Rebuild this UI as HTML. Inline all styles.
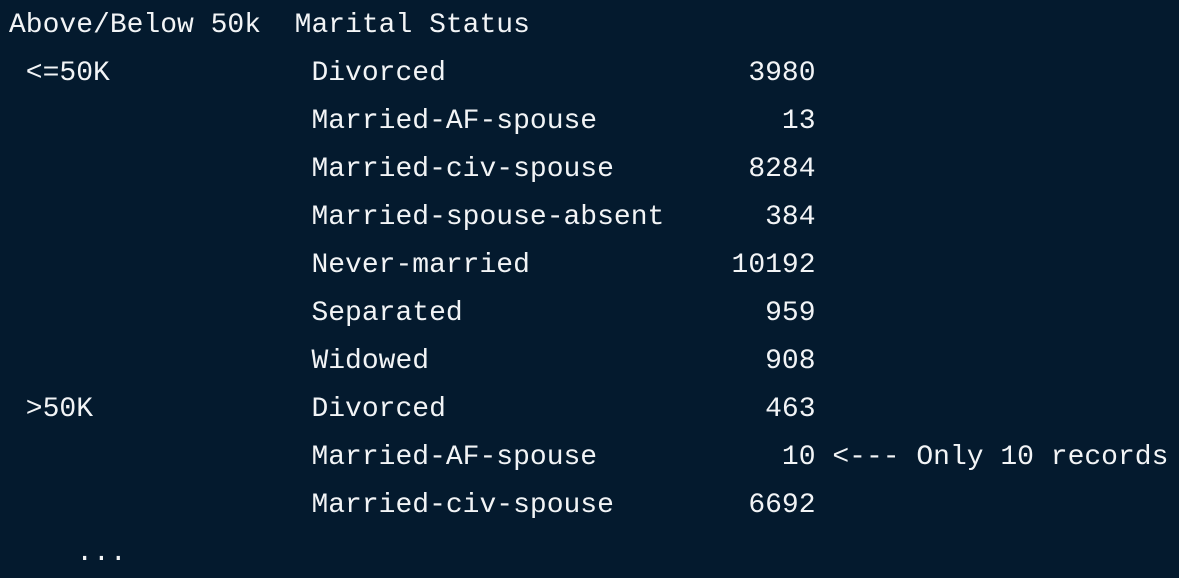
<!DOCTYPE html>
<html><head><meta charset="utf-8"><style>
html,body{margin:0;padding:0;background:#041a2e;width:1179px;height:575px;overflow:hidden}
pre{margin:0;position:absolute;left:9px;top:2px;font-family:"Liberation Mono",monospace;font-size:28px;line-height:48px;color:#f2f4f6}
</style></head><body><pre>Above/Below 50k  Marital Status
 &lt;=50K            Divorced                  3980
                  Married-AF-spouse           13
                  Married-civ-spouse        8284
                  Married-spouse-absent      384
                  Never-married            10192
                  Separated                  959
                  Widowed                    908
 &gt;50K             Divorced                   463
                  Married-AF-spouse           10 &lt;--- Only 10 records
                  Married-civ-spouse        6692
    ...</pre></body></html>
